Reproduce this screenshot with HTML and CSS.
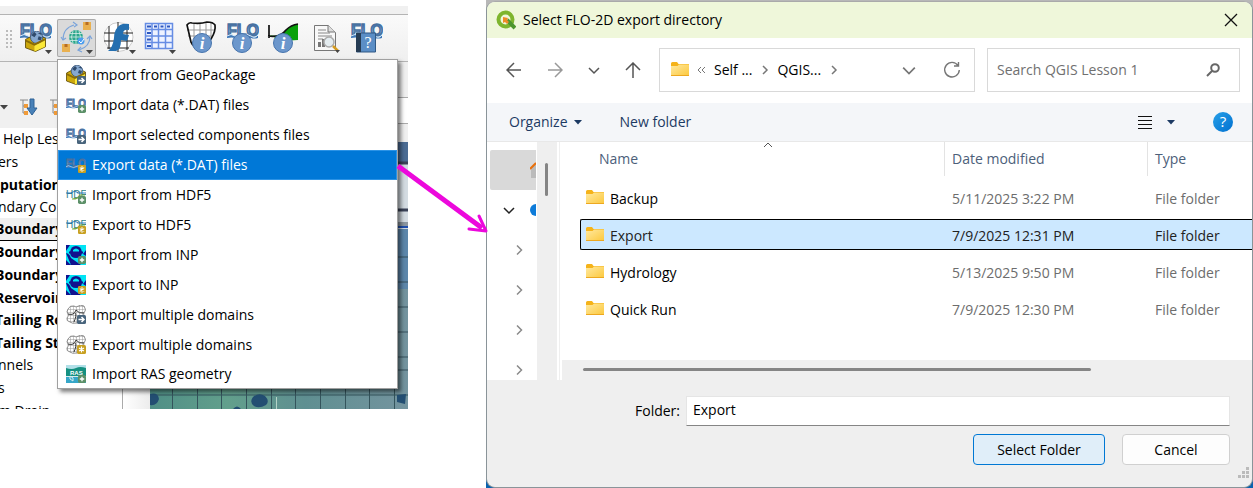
FILE: index.html
```html
<!DOCTYPE html>
<html lang="en">
<head>
    <meta charset="UTF-8">
    <meta name="viewport" content="width=device-width, initial-scale=1.0">
    <title>Select FLO-2D export directory</title>
    <link rel="stylesheet" href="styles.css">
</head>
<body>
    <!-- Shared icon parts -->
    <svg class="defs" aria-hidden="true">
        <defs>
            <linearGradient id="floFill" x1="0" y1="0" x2="0" y2="1">
                <stop offset="0.2" stop-color="#4a76b4"/>
                <stop offset="0.55" stop-color="#86abd8"/>
                <stop offset="0.9" stop-color="#2a5696"/>
            </linearGradient>
            <linearGradient id="folderFill" x1="0" y1="0" x2="1" y2="1">
                <stop offset="0" stop-color="#ffe9a0"/>
                <stop offset="1" stop-color="#fcc83c"/>
            </linearGradient>
            <linearGradient id="helpFill" x1="0" y1="0" x2="1" y2="1">
                <stop offset="0" stop-color="#28a0e8"/>
                <stop offset="1" stop-color="#0070d0"/>
            </linearGradient>
            <pattern id="mesh" width="3" height="3" patternUnits="userSpaceOnUse">
                <path d="M0 1.5H3M1.5 0V3" stroke="#999" stroke-width="0.5"/>
            </pattern>
        </defs>
        <symbol id="flo" viewBox="0 0 32 18">
            <text x="0" y="14" class="flo-text">FLO</text>
            <path d="M0 14q4-3 8 0t8 0 8 0 7-1v3q-4 1-7 0t-8 0-8 0-8 0z" fill="#3f78b8"/>
            <path d="M0 14q4-3 8 0t8 0 8 0 7-1" fill="none" stroke="#d9ecfa" stroke-width="1"/>
        </symbol>
        <symbol id="info" viewBox="0 0 20 20">
            <circle cx="10" cy="10" r="9.5" fill="#6c97cc" stroke="#4774ad"/>
            <text x="10" y="16" class="info-text">i</text>
        </symbol>
        <symbol id="box" viewBox="0 0 20 20">
            <path d="M0.5 8l9.500-5 9.500 4v8l-9.500 4.500L0.500 16z" fill="#cda80c" stroke="#5a4704" stroke-width="0.8"/>
            <path d="M9 12l10-5v8l-10 4.500z" fill="#fbe838"/>
            <circle cx="11" cy="6" r="5.800" fill="#86a8d0" stroke="#38557a" stroke-width="0.8"/>
            <path d="M6 4l3-3 2 2-2 3zM12 8l1-3 3 1-1 3zM12 2l3 0 1 2z" fill="#2f4a6c"/>
            <path d="M0.500 8l8.500 4 10-5v2l-10 5-8.500-4z" fill="#8a6c06"/>
        </symbol>
        <symbol id="plus" viewBox="0 0 9 9">
            <rect width="9" height="9" rx="2" fill="#5c9068"/>
            <path d="M4.5 2v5M2 4.500h5" stroke="#fff" stroke-width="1.500"/>
        </symbol>
        <symbol id="star" viewBox="0 0 9 9">
            <rect width="9" height="9" rx="1.500" fill="#c8a020"/>
            <path d="M4.500 1.500v6M2 3l5 3M7 3L2 6" stroke="#fff" stroke-width="1.200"/>
        </symbol>
        <symbol id="go" viewBox="0 0 9 9">
            <rect width="9" height="9" rx="1.500" fill="#48647c"/>
            <path d="M1.500 4.500h5M4.500 2l2.500 2.500L4.500 7" fill="none" stroke="#fff" stroke-width="1.500"/>
        </symbol>
        <symbol id="hdf" viewBox="0 0 20 20">
            <text x="0" y="13" class="hdf-text">HDF</text>
            <path d="M0 8h5q4-3 7 0h8" fill="none" stroke="#2f77b4" stroke-width="1.200"/>
            <path d="M6 14q7 0 8-4h5" fill="none" stroke="#76a93e" stroke-width="1.200"/>
        </symbol>
        <symbol id="swmm" viewBox="0 0 20 20">
            <rect width="20" height="20" fill="#00e4f4"/>
            <path d="M10 1q5 0 6 6 0 6-6 6T4 7q1-6 6-6z" fill="#12128e"/>
            <path d="M0 0h4L0 6zM0 8q3 0 5 5l10 7H5zM20 5v6l-3-2zM0 15l5 5H0z" fill="#12128e"/>
            <path d="M7 5q3-3 6 0v2H7z" fill="#00e4f4"/>
            <path d="M3 7.500h14" stroke="#12128e" stroke-width="2"/>
        </symbol>
        <symbol id="domains" viewBox="0 0 20 20">
            <path d="M2 4q2-4 6-3l2 1q5-3 8-1 3 4 0 7 0 5-3 6l-4 4q-5 1-7-1-4-1-3-4 2-2 1-4-2-2 0-5z" fill="#fff"/>
            <path d="M2 4q2-4 6-3l2 1q5-3 8-1 3 4 0 7 0 5-3 6l-4 4q-5 1-7-1-4-1-3-4 2-2 1-4-2-2 0-5z" fill="url(#mesh)" stroke="#777" stroke-width="0.800"/>
            <path d="M2 9q6 2 8-4 3 4 8 3M9 8q2 2-1 9" fill="none" stroke="#333" stroke-width="1"/>
        </symbol>
        <symbol id="folder" viewBox="0 0 18 15">
            <path d="M0 1.500Q0 0 1.500 0H6l1.500 2H18v4H0z" fill="#f5b31a"/>
            <path d="M0 4h6.500L8 2.500h10V14H0z" fill="url(#folderFill)"/>
            <path d="M0 13.500h18" stroke="#eda820"/>
        </symbol>
        <symbol id="chevron" viewBox="0 0 12 12">
            <path d="M4 1.500L8.500 6 4 10.500" fill="none" stroke="currentColor" stroke-width="1.500"/>
        </symbol>
        <symbol id="down" viewBox="0 0 12 12">
            <path d="M1 4l5 5 5-5" fill="none" stroke="currentColor" stroke-width="1.500"/>
        </symbol>
        <symbol id="caret" viewBox="0 0 8 5">
            <path d="M0 0h8L4 4.500z" fill="currentColor"/>
        </symbol>
    </svg>

    <main class="page">
        <!-- QGIS main window -->
        <section class="qgis">
            <div class="toolbar">
                <button class="tool" aria-label="GeoPackage">
                    <svg viewBox="0 0 39 38"><use href="#flo" x="4" y="3" width="32" height="18"/><use href="#box" x="9" y="12" width="21" height="21"/><path d="M29 31h7l-3.500 4z" fill="#444"/></svg>
                </button>
                <button class="tool pressed" aria-label="Import and export">
                    <svg viewBox="0 0 39 38">
                        <path d="M6 21Q6 9 17 6M33 17q0 11-11 14" fill="none" stroke="#7ba4da" stroke-width="1.200"/>
                        <path d="M4 18l2 3 3-2M16 3l4 3-3 2M30 20l3-3 2 3M24 28l-3 3 4 2" fill="none" stroke="#7ba4da" stroke-width="1.200"/>
                        <circle cx="19" cy="18" r="7" fill="#2ba78c"/>
                        <path d="M12 18h14M19 11v14M13 14.500h12M13 21.500h12M16 12q-3 6 0 12M22 12q3 6 0 12" fill="none" stroke="#d8eee8" stroke-width="0.800"/>
                        <circle cx="24" cy="22" r="3.500" fill="#4b9df0"/><path d="M22 22l2 2 3-4" fill="none" stroke="#fff"/>
                        <path d="M26 3h8v8h-8zM5 25h8v8H5z" fill="#e9b04f"/><path d="M28.500 3h3v3h-3zM7.500 25h3v3h-3z" fill="#b86d22"/>
                        <path d="M29 31h7l-3.500 4z" fill="#444"/>
                    </svg>
                </button>
                <button class="tool" aria-label="FLO-2D">
                    <svg viewBox="0 0 39 38">
                        <circle cx="19.500" cy="18" r="14.500" fill="#fff" stroke="#ccc"/>
                        <path d="M5 14h29M5 22h29M8 29h22M10 7v23M19 3v30M28 6v25" stroke="#222" stroke-width="1"/>
                        <path d="M9 32q5-4 6-13 0-9 6-13 4-2 9-1l0 6q-6-1-6 4l6 1-2 6-6-1q0 10-5 11z" fill="#246fb0"/>
                        <path d="M30 31h7l-3.500 4z" fill="#444"/>
                    </svg>
                </button>
                <button class="tool" aria-label="Tables">
                    <svg viewBox="0 0 39 38">
                        <rect x="5" y="4" width="27" height="26" fill="#eef3ff"/>
                        <path d="M5.500 4.500h27v25h-27zM5 10.500h27M5 17h27M5 23.500h27M12 4v26M18.500 4v26M25.500 4v26" fill="none" stroke="#668de4" stroke-width="1.500"/>
                        <path d="M7 7.500h4M14 7.500h3M20.500 7.500h3M27 7.500h3M7 14h4M7 20.500h4M7 27h4" stroke="#2c57c0" stroke-width="2"/>
                        <path d="M29 31h7l-3.500 4z" fill="#444"/>
                    </svg>
                </button>
                <button class="tool" aria-label="Domain info">
                    <svg viewBox="0 0 39 38">
                        <path d="M5 6q2-3 5-2 9 1 15-1 6 0 8 3 1 6-4 14l-8 8q-10 1-12-5z" fill="#fff"/>
                        <path d="M5 11h28M6 17h25M8 23h20M12 4v24M18 4v25M24 4v22M29 4v15" stroke="#999"/>
                        <path d="M5 6q2-3 5-2 9 1 15-1 6 0 8 3 1 6-4 14l-8 8q-10 1-12-5z" fill="none" stroke="#111" stroke-width="1.700"/>
                        <use href="#info" x="10" y="14" width="20" height="20"/>
                    </svg>
                </button>
                <button class="tool" aria-label="FLO info">
                    <svg viewBox="0 0 39 38"><use href="#flo" x="4" y="3" width="32" height="18"/><use href="#info" x="9" y="14" width="20" height="20"/></svg>
                </button>
                <button class="tool" aria-label="Profile info">
                    <svg viewBox="0 0 39 38"><path d="M5 16q10 3 17-5 5-5 12-6v16l-16 1z" fill="#09a00a"/><path d="M5 6v13M4 17q12 2 18-6 5-5 12-6" fill="none" stroke="#111" stroke-width="1.700"/><use href="#info" x="9" y="14" width="20" height="20"/></svg>
                </button>
                <button class="tool" aria-label="Report">
                    <svg viewBox="0 0 39 38">
                        <path d="M8.500 6.500h14l7 7v18h-21z" fill="#f8f8f8" stroke="#777"/>
                        <path d="M22 6v7h7" fill="#ddd" stroke="#777"/>
                        <path d="M12 11h8M12 14h12M12 17h14M12 20h5" stroke="#888"/><path d="M12 28v-5h3v5zM16 28v-8h3v8z" fill="#777"/>
                        <circle cx="23" cy="23" r="5" fill="#e4ecf0" stroke="#aaa" stroke-width="1.500"/>
                        <path d="M27 27l5 5" stroke="#d39b22" stroke-width="2.500"/><path d="M29 31h5l-2.500 3z" fill="#444"/>
                    </svg>
                </button>
                <button class="tool" aria-label="Help">
                    <svg viewBox="0 0 39 38"><use href="#flo" x="4" y="3" width="32" height="18"/><path d="M9.500 14h19v19h-19z" fill="#5b8ec6" stroke="#315985"/><path d="M9 14h5v19H9z" fill="#263c54"/><text x="21" y="29" class="book-text">?</text></svg>
                </button>
            </div>

            <div class="workspace">
                <div class="layers">
                    <div class="layers-tools">
                        <svg class="caret" width="8" height="5"><use href="#caret"/></svg>
                        <svg width="18" height="18" viewBox="0 0 18 18"><path d="M0 2h8M3 2v13M3 8h4M3 15h5" fill="none" stroke="#888"/><path d="M4 6h4v4H4zM4 13h4v4H4z" fill="#f09b39"/><path d="M10 1h4v9h3l-5 7-5-7h3z" fill="#4881b8" stroke="#2f6296"/></svg>
                        <svg width="18" height="18" viewBox="0 0 18 18"><path d="M0 2h8M3 2v13M3 8h4M3 15h5" fill="none" stroke="#888"/><path d="M4 6h4v4H4zM4 13h4v4H4z" fill="#f09b39"/></svg>
                    </div>
                    <ul class="tree">
                        <li class="indent">Help Lesson</li>
                        <li>ers</li>
                        <li class="strong inner">putational</li>
                        <li>ndary Con</li>
                        <li class="strong current">Boundary</li>
                        <li class="strong">Boundary</li>
                        <li class="strong">Boundary</li>
                        <li class="strong">Reservoir</li>
                        <li class="strong">Tailing Re</li>
                        <li class="strong">Tailing St</li>
                        <li>nnels</li>
                        <li>s</li>
                        <li>m Drain</li>
                    </ul>
                </div>
                <div class="splitter"></div>
                <div class="canvas">
                    <div class="canvas-bar"></div>
                    <svg class="map" viewBox="0 0 258 267" preserveAspectRatio="none">
                        <defs>
                            <linearGradient id="field">
                                <stop offset="0" stop-color="#4f8f86"/>
                                <stop offset="0.3" stop-color="#629f8c"/>
                                <stop offset="0.6" stop-color="#5f8f91"/>
                                <stop offset="1" stop-color="#74949f"/>
                            </linearGradient>
                        </defs>
                        <rect width="258" height="267" fill="url(#field)"/>
                        <path d="M240 0h18v20h-18z" fill="#4b6c94"/>
                        <path d="M240 22h18v72h-18z" fill="#d4dce2"/>
                        <path d="M240 21h18M240 68h18" stroke="#3b4358" stroke-width="3"/>
                        <path d="M240 82h18" stroke="#8d97a0" stroke-width="4"/>
                        <path d="M240 85h18" stroke="#2050b0" stroke-width="2"/>
                        <path d="M240 87h18v60h-18z" fill="#5d87ab"/>
                        <path d="M240 115h18M240 140h18M240 165h18M240 190h18M240 215h18M240 228h18" stroke="#37515d"/>
                        <path d="M0 253h258M22.500 240v27M47.500 240v27M71.500 240v27M96.500 240v27M121.500 240v27M145.500 240v27M170.500 240v27M195.500 240v27M219.500 240v27M244.500 240v27" stroke="#34545c"/>
                        <path d="M103 255q6-5 12-1 5 5 1 9-7 4-12 1-5-4-1-9zM0 252q8-2 9 5-2 7-9 6zM247 253l9-1-1 10-8-2zM83 267q4-5 8 0z" fill="#234e72"/>
                        <path d="M126.500 255v12" stroke="#b4d4c8"/>
                    </svg>
                </div>
            </div>

            <div class="menu" role="menu">
                <button class="menu-item" role="menuitem"><svg viewBox="0 0 20 20"><use href="#box" width="20" height="20"/><use href="#go" x="11" y="11" width="9" height="9"/></svg>Import from GeoPackage</button>
                <button class="menu-item" role="menuitem"><svg viewBox="0 0 20 20"><use href="#flo" y="2" width="20" height="13"/><use href="#plus" x="12" y="10" width="8" height="8"/></svg>Import data (*.DAT) files</button>
                <button class="menu-item" role="menuitem"><svg viewBox="0 0 20 20"><use href="#flo" y="2" width="20" height="13"/><use href="#go" x="11" y="10" width="9" height="9"/></svg>Import selected components files</button>
                <button class="menu-item active" role="menuitem"><svg viewBox="0 0 20 20"><use href="#flo" y="2" width="20" height="13"/><use href="#star" x="12" y="10" width="8" height="8"/></svg>Export data (*.DAT) files</button>
                <button class="menu-item" role="menuitem"><svg viewBox="0 0 20 20"><use href="#hdf" width="20" height="20"/><use href="#plus" x="12" y="11" width="8" height="8"/></svg>Import from HDF5</button>
                <button class="menu-item" role="menuitem"><svg viewBox="0 0 20 20"><use href="#hdf" width="20" height="20"/><use href="#star" x="12" y="11" width="8" height="8"/></svg>Export to HDF5</button>
                <button class="menu-item" role="menuitem"><svg viewBox="0 0 20 20"><use href="#swmm" width="20" height="20"/><use href="#plus" x="12" y="11" width="8" height="8"/></svg>Import from INP</button>
                <button class="menu-item" role="menuitem"><svg viewBox="0 0 20 20"><use href="#swmm" width="20" height="20"/><use href="#star" x="12" y="11" width="8" height="8"/></svg>Export to INP</button>
                <button class="menu-item" role="menuitem"><svg viewBox="0 0 20 20"><use href="#domains" width="20" height="20"/><use href="#go" x="11" y="10" width="9" height="9"/></svg>Import multiple domains</button>
                <button class="menu-item" role="menuitem"><svg viewBox="0 0 20 20"><use href="#domains" width="20" height="20"/><use href="#star" x="11" y="10" width="9" height="9"/></svg>Export multiple domains</button>
                <button class="menu-item" role="menuitem"><svg viewBox="0 0 20 20"><path d="M0 1h20v18H0z" fill="#159080"/><path d="M0 1h20v3q-6-2-10 0T0 4z" fill="#b2e0e8"/><path d="M0 12h20v7H0z" fill="#36a6c8"/><path d="M0 12.500h20M4 12v3l3 2v-3z" stroke="#d7ecef" fill="none"/><text x="4" y="11" class="ras-text">RAS</text><use href="#plus" x="12" y="11" width="8" height="8"/></svg>Import RAS geometry</button>
            </div>
        </section>

        <svg class="pointer" width="96" height="74" viewBox="0 0 96 74" aria-hidden="true">
            <path d="M3 4L87 66" stroke="#ec08dc" stroke-width="5"/>
            <path d="M84 54l7 15-17-2" fill="none" stroke="#ec08dc" stroke-width="3" stroke-linecap="round" stroke-linejoin="round"/>
        </svg>

        <!-- Folder dialog -->
        <section class="backdrop">
            <form class="dialog" onsubmit="return false">
                <header class="titlebar">
                    <svg width="20" height="20" viewBox="0 0 20 20"><circle cx="9.500" cy="9.500" r="7" fill="none" stroke="#7eb52d" stroke-width="4"/><path d="M11 10l8 8" stroke="#4d962e" stroke-width="4"/><path d="M7 7l5 1-1 2 2 2-2 2-2-2-2 1z" fill="#ef8b26"/></svg>
                    <h1>Select FLO-2D export directory</h1>
                    <button class="icon-button close" type="button" aria-label="Close"><svg width="14" height="14"><path d="M1 1l12 12M13 1L1 13" stroke="#111" stroke-width="1.300"/></svg></button>
                </header>

                <nav class="navbar">
                    <div class="history">
                        <button class="icon-button" type="button" aria-label="Back"><svg width="16" height="16"><path d="M15 8H1M8 1L1 8l7 7" fill="none" stroke="#555" stroke-width="1.500"/></svg></button>
                        <button class="icon-button" type="button" aria-label="Forward"><svg width="16" height="16"><path d="M1 8h14M8 1l7 7-7 7" fill="none" stroke="#999" stroke-width="1.500"/></svg></button>
                        <button class="icon-button" type="button" aria-label="Recent"><svg width="12" height="12"><use href="#down"/></svg></button>
                        <button class="icon-button" type="button" aria-label="Up"><svg width="16" height="16"><path d="M8 16V1M1 8l7-7 7 7" fill="none" stroke="#555" stroke-width="1.500"/></svg></button>
                    </div>
                    <div class="address">
                        <svg width="18" height="15"><use href="#folder"/></svg>
                        <svg class="gray" width="9" height="8"><path d="M4 1L1 4l3 3M8 1L5 4l3 3" fill="none" stroke="currentColor"/></svg>
                        <button class="crumb" type="button">Self ...</button>
                        <svg class="gray" width="9" height="11" viewBox="0 0 9 11"><path d="M3 2l4 4-4 4" fill="none" stroke="currentColor" stroke-width="1.500"/></svg>
                        <button class="crumb" type="button">QGIS...</button>
                        <svg class="gray" width="9" height="11" viewBox="0 0 9 11"><path d="M3 2l4 4-4 4" fill="none" stroke="currentColor" stroke-width="1.500"/></svg>
                        <button class="icon-button history-toggle" type="button" aria-label="Previous locations"><svg width="14" height="14"><use href="#down"/></svg></button>
                        <button class="icon-button" type="button" aria-label="Refresh"><svg width="18" height="18"><path d="M15 4.500A7.300 7.300 0 1 0 16.300 9M15.500 1v4h-4.500" fill="none" stroke="#777" stroke-width="1.400"/></svg></button>
                    </div>
                    <div class="search">
                        <input type="search" placeholder="Search QGIS Lesson 1" aria-label="Search QGIS Lesson 1">
                        <svg width="14" height="14"><circle cx="9" cy="5" r="3.800" fill="none" stroke="#666" stroke-width="2"/><path d="M6 8l-5 5" stroke="#666" stroke-width="2"/></svg>
                    </div>
                </nav>

                <div class="commands">
                    <button class="command" type="button">Organize <svg width="8" height="5"><use href="#caret"/></svg></button>
                    <button class="command" type="button">New folder</button>
                    <button class="icon-button view" type="button" aria-label="View"><svg width="14" height="14"><path d="M0 1.500h14M0 5.500h14M0 9.500h14M0 13.500h14" stroke="#111"/></svg></button>
                    <button class="icon-button" type="button" aria-label="More views"><svg width="8" height="5"><use href="#caret"/></svg></button>
                    <button class="icon-button" type="button" aria-label="Help"><svg width="20" height="20"><circle cx="10" cy="10" r="10" fill="url(#helpFill)"/><text x="10" y="15" class="help-text">?</text></svg></button>
                </div>

                <div class="content">
                    <div class="places">
                        <div class="place home"><svg width="6" height="18" viewBox="0 0 6 18"><path d="M1 7l5-4v14H1z" fill="#bbb"/><path d="M0 8l6-6" stroke="#e8700c" stroke-width="2"/></svg></div>
                        <div class="place cloud"><svg class="dark" width="12" height="12"><use href="#down"/></svg><svg width="6" height="12"><circle cx="6" cy="6" r="6" fill="#0d7bd9"/></svg></div>
                        <div class="place"><svg width="12" height="12"><use href="#chevron"/></svg></div>
                        <div class="place"><svg width="12" height="12"><use href="#chevron"/></svg></div>
                        <div class="place"><svg width="12" height="12"><use href="#chevron"/></svg></div>
                        <div class="place"><svg width="12" height="12"><use href="#chevron"/></svg></div>
                    </div>
                    <div class="scroll-v"><div class="thumb"></div></div>
                    <div class="files">
                        <table>
                            <thead>
                                <tr><th>Name<svg class="sort" width="10" height="6"><path d="M1 5l4-4 4 4" fill="none" stroke="#555"/></svg></th><th class="date">Date modified</th><th class="type">Type</th></tr>
                            </thead>
                            <tbody>
                                <tr><td><svg width="18" height="15"><use href="#folder"/></svg>Backup</td><td>5/11/2025 3:22 PM</td><td>File folder</td></tr>
                                <tr class="selected"><td><svg width="18" height="15"><use href="#folder"/></svg>Export</td><td>7/9/2025 12:31 PM</td><td>File folder</td></tr>
                                <tr><td><svg width="18" height="15"><use href="#folder"/></svg>Hydrology</td><td>5/13/2025 9:50 PM</td><td>File folder</td></tr>
                                <tr><td><svg width="18" height="15"><use href="#folder"/></svg>Quick Run</td><td>7/9/2025 12:30 PM</td><td>File folder</td></tr>
                            </tbody>
                        </table>
                        <div class="scroll-h"><div class="thumb"></div></div>
                    </div>
                </div>

                <footer class="footer">
                    <div class="field">
                        <label for="folder-name">Folder:</label>
                        <input type="text" id="folder-name" value="Export">
                    </div>
                    <div class="actions">
                        <button class="action primary" type="submit">Select Folder</button>
                        <button class="action" type="button">Cancel</button>
                    </div>
                    <svg class="grip" width="12" height="12"><path d="M9 0h3v3H9zM9 4h3v3H9zM5 4h3v3H5zM9 8h3v3H9zM5 8h3v3H5zM1 8h3v3H1z" fill="#bbb"/></svg>
                </footer>
            </form>
        </section>
    </main>
</body>
</html>
```
FILE: styles.css
```css
* {
    box-sizing: border-box;
}

body {
    margin: 0;
    background: #fff;
    color: #000;
    font: 14px/20px "Open Sans", "Noto Sans", sans-serif;
}

button,
input {
    font: inherit;
    color: inherit;
}

button {
    padding: 0;
    border: 0;
    background: none;
}

svg {
    flex: none;
    display: block;
}

.defs {
    position: absolute;
    width: 0;
    height: 0;
}

.page {
    display: grid;
    grid-template-columns: 408px 1fr;
    column-gap: 78px;
    align-items: start;
    position: relative;
}

/* QGIS window */
.qgis {
    position: relative;
    margin-top: 6px;
    padding-top: 8px;
    background: #f0f0f0;
}

.toolbar {
    display: flex;
    justify-content: space-between;
    align-items: center;
    height: 48px;
    padding: 0 22px 0 16px;
    border-top: 1px solid #b4b4b4;
    border-bottom: 1px solid #b4b4b4;
    background: linear-gradient(#fafafa, #efefef);
    position: relative;
}

/* Drag handle */
.toolbar::before {
    content: "";
    position: absolute;
    left: 5px;
    top: 14px;
    width: 8px;
    height: 20px;
    background: radial-gradient(#bbb 1px, transparent 1px) 0 0 / 4px 4px;
}

.tool {
    width: 39px;
    height: 38px;
    border-radius: 2px;
}

.tool.pressed {
    background: #dadada;
    box-shadow: inset 0 0 0 1px #aaa;
}

.workspace {
    display: grid;
    grid-template-columns: 123px 27px 1fr;
    height: 347px;
}

.layers {
    overflow: hidden;
}

.layers-tools {
    display: flex;
    align-items: center;
    gap: 12px;
    height: 66px;
    padding-top: 24px;
}

.layers-tools .caret {
    color: #444;
}

.tree {
    display: grid;
    grid-auto-rows: 1fr;
    height: 294px;
    margin: 0;
    padding: 0;
    list-style: none;
    background: #fff;
    border-right: 1px solid #aaa;
}

.tree li {
    display: flex;
    align-items: center;
    margin-left: -2px;
    white-space: nowrap;
}

.tree .indent {
    margin-left: 3px;
}

.tree .strong {
    margin-left: -5px;
    font-weight: 700;
}

.tree .inner {
    margin-left: 0;
}

.tree .current {
    background: #f0f0f0;
    border-bottom: 1px solid #000;
}

.splitter {
    background: linear-gradient(90deg, #fff, #ececec);
}

.canvas {
    display: flex;
    flex-direction: column;
    padding-top: 35px;
}

.canvas-bar {
    height: 27px;
    margin-bottom: 18px;
    background: #fff;
    border-top: 1px solid #aaa;
    border-bottom: 1px solid #aaa;
}

.map {
    width: 100%;
    height: 267px;
}

.menu {
    position: absolute;
    left: 57px;
    top: 53px;
    width: 341px;
    border: 1px solid #a0a0a0;
    background: #fff;
    box-shadow: 3px 3px 4px rgba(0, 0, 0, 0.5);
}

.menu-item {
    display: flex;
    align-items: center;
    gap: 6px;
    width: 100%;
    height: 30px;
    padding-left: 8px;
}

.menu-item:last-child {
    height: 28px;
}

.menu-item svg {
    width: 20px;
    height: 20px;
}

.menu-item.active {
    background: #0078d7;
    color: #fff;
    box-shadow: inset 0 0 0 1px #2b93e6;
}

.pointer {
    position: absolute;
    left: 395px;
    top: 162px;
    z-index: 1;
}

/* Text inside icons */
.flo-text {
    font: bold 16px "Liberation Sans", sans-serif;
    fill: url(#floFill);
    stroke: #48719f;
    stroke-width: 1.4px;
}

.info-text {
    font: italic bold 17px "Liberation Serif", serif;
    fill: #fff;
    text-anchor: middle;
}

.book-text {
    font: 16px "Liberation Serif", serif;
    fill: #fff;
    text-anchor: middle;
}

.hdf-text {
    font: 10px "Liberation Sans", sans-serif;
    fill: #2f7f8c;
}

.ras-text {
    font: bold 6px "Liberation Sans", sans-serif;
    fill: #fff;
}

.help-text {
    font: 15px "Open Sans", sans-serif;
    fill: #fff;
    text-anchor: middle;
}

/* Dialog */
.backdrop {
    padding-top: 1px;
    background: linear-gradient(#b8b8b8 50%, #0a62ae 50%);
}

.dialog {
    height: 487px;
    border: 1px solid #8a9499;
    border-top-color: #aaa;
    border-radius: 9px;
    background: #efefef;
    overflow: hidden;
}

.icon-button {
    display: flex;
    align-items: center;
    justify-content: center;
}

.titlebar {
    display: flex;
    align-items: center;
    gap: 7px;
    height: 36px;
    padding: 0 14px 0 9px;
    background: #eff7da;
}

.titlebar h1 {
    margin: 0;
    font-size: 14px;
    font-weight: 400;
}

.close {
    margin-left: auto;
}

.navbar {
    display: flex;
    align-items: center;
    gap: 12px;
    height: 65px;
    padding: 0 12px 2px 19px;
    background: #fff;
}

.history {
    display: flex;
    align-items: center;
    justify-content: space-between;
    width: 135px;
    margin-right: 6px;
    color: #555;
}

.address,
.search {
    display: flex;
    align-items: center;
    height: 44px;
    border: 1px solid #d9d9d9;
}

.address {
    flex: 1;
    gap: 8px;
    padding: 0 13px 0 11px;
}

.gray,
.history-toggle {
    color: #777;
}

.history-toggle {
    margin: 0 19px 0 auto;
}

.search {
    width: 253px;
    padding: 0 19px 0 9px;
}

.search input {
    flex: 1;
    min-width: 0;
    padding: 0;
    border: 0;
    outline: 0;
}

.search input::placeholder {
    color: #707070;
}

.commands {
    display: flex;
    align-items: center;
    gap: 38px;
    height: 39px;
    padding: 0 19px 0 22px;
    border-bottom: 1px solid #e8e8e8;
    background: #f4f6f9;
    color: #1c3a63;
}

.command {
    display: flex;
    align-items: center;
    gap: 6px;
}

.view {
    margin: 0 -23px 0 auto;
}

.content {
    display: flex;
    height: 238px;
    background: #fff;
}

.places {
    width: 50px;
    padding: 8px 1px 0 3px;
    overflow: hidden;
}

.place {
    display: flex;
    align-items: center;
    height: 40px;
    padding-left: 23px;
    color: #8a8a8a;
}

.place.home {
    justify-content: flex-end;
    border-radius: 2px 0 0 2px;
    background: #d9d9d9;
}

.place.cloud {
    justify-content: space-between;
    padding-left: 13px;
}

.dark {
    color: #222;
}

.thumb {
    border-radius: 2px;
    background: #858585;
}

.scroll-v {
    width: 20px;
    padding: 21px 9px 0 8px;
    background: #efefef;
}

.scroll-v .thumb {
    height: 33px;
}

.files {
    flex: 1;
    display: flex;
    flex-direction: column;
    justify-content: space-between;
    margin-left: 2px;
    border-left: 1px solid #efefef;
}

.files table {
    width: calc(100% - 20px);
    margin: -6px 0 0 20px;
    table-layout: fixed;
    border-spacing: 0 6px;
}

th {
    position: relative;
    height: 34px;
    padding: 0 0 0 7px;
    border-left: 1px solid #e3e3e3;
    color: #4c607a;
    font-weight: 400;
    text-align: left;
}

th:first-child {
    padding-left: 19px;
    border-left: 0;
}

.date {
    width: 203px;
}

.type {
    width: 105px;
}

.sort {
    position: absolute;
    left: 183px;
    top: 0;
}

td {
    height: 31px;
    padding: 2px 0 0 8px;
    border: solid transparent;
    border-width: 1px 0;
    color: #6d6d6d;
}

td:first-child {
    padding-left: 6px;
    color: #000;
}

td svg {
    display: inline-block;
    margin-right: 6px;
    vertical-align: -1px;
}

.selected td {
    border-color: #000;
    background: #cce8ff;
    color: #222;
}

.selected td:first-child {
    border-left: 1px solid #000;
    border-radius: 2px 0 0 2px;
    padding-left: 5px;
}

.scroll-h {
    height: 20px;
    margin-left: 2px;
    padding: 8px 161px 9px 21px;
    background: #efefef;
}

.scroll-h .thumb {
    height: 3px;
}

.footer {
    position: relative;
    padding: 16px 22px;
}

.field {
    display: flex;
    align-items: center;
    gap: 6px;
    padding-left: 126px;
}

.field input {
    flex: 1;
    height: 30px;
    padding: 0 6px 3px;
    border: 1px solid #e5e5e5;
    border-bottom-color: #858585;
    outline: 0;
}

.actions {
    display: flex;
    justify-content: flex-end;
    gap: 17px;
    margin-top: 8px;
}

.action {
    width: 108px;
    height: 31px;
    border: 1px solid #d0d0d0;
    border-radius: 4px;
    background: #fdfdfd;
}

.primary {
    width: 132px;
    border-color: #0078d4;
    background: #e0eef9;
}

.grip {
    position: absolute;
    right: 3px;
    bottom: 2px;
}
```
